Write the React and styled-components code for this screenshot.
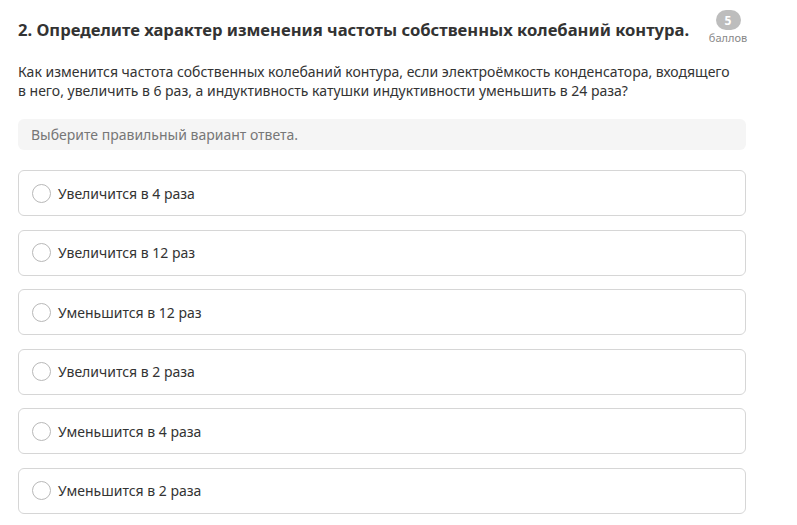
import styled, { createGlobalStyle } from 'styled-components';

const GlobalStyle = createGlobalStyle`
  body {
    margin: 0;
    background: #fff;
    font-family: "Noto Sans", "Open Sans", sans-serif;
    color: #333;
  }
`;

const Page = styled.main`
  width: 728px;
  padding: 10px 0 0 18px;
`;

const Header = styled.div`
  display: flex;
  align-items: flex-start;
  justify-content: space-between;
`;

const Title = styled.h2`
  margin: 8px 0 0;
  font-size: 16.6px;
  font-weight: 700;
  line-height: 24px;
  color: #333;
`;

const Score = styled.div`
  display: flex;
  flex-direction: column;
  align-items: center;
  width: 44px;
  margin-right: -4px;
`;

const ScoreBadge = styled.span`
  display: flex;
  align-items: center;
  justify-content: center;
  width: 25px;
  height: 20px;
  border-radius: 10px;
  background: #bdbdbd;
  color: #fff;
  font-size: 12px;
  font-weight: 700;
`;

const ScoreLabel = styled.span`
  margin-top: 1px;
  font-size: 11px;
  color: #888;
  line-height: 14px;
`;

const Question = styled.p`
  margin: 17px 0 0;
  font-size: 14px;
  line-height: 19px;
  color: #333;
`;

const Hint = styled.div`
  margin-top: 19px;
  padding: 0 13px;
  height: 31px;
  display: flex;
  align-items: center;
  background: #f5f5f5;
  border-radius: 6px;
  font-size: 14px;
  color: #777;
`;

const Options = styled.div`
  display: flex;
  flex-direction: column;
  gap: 13.6px;
  margin-top: 20px;
`;

const Option = styled.label`
  display: flex;
  align-items: center;
  gap: 7px;
  height: 46px;
  box-sizing: border-box;
  padding: 0 13px;
  border: 1px solid #d6d6d6;
  border-radius: 6px;
  font-size: 14px;
  color: #333;
  cursor: pointer;
`;

const Radio = styled.span`
  width: 19px;
  height: 19px;
  box-sizing: border-box;
  border: 1px solid #b8b8b8;
  border-radius: 50%;
  background: #fff;
  flex: none;
`;

const answers = [
  'Увеличится в 4 раза',
  'Увеличится в 12 раз',
  'Уменьшится в 12 раз',
  'Увеличится в 2 раза',
  'Уменьшится в 4 раза',
  'Уменьшится в 2 раза',
];

const App = () => {
  return (
    <Page>
      <GlobalStyle />
      <Header>
        <Title>2. Определите характер изменения частоты собственных колебаний контура.</Title>
        <Score>
          <ScoreBadge>5</ScoreBadge>
          <ScoreLabel>баллов</ScoreLabel>
        </Score>
      </Header>
      <Question>
        Как изменится частота собственных колебаний контура, если электроёмкость конденсатора, входящего
        <br />
        в него, увеличить в 6 раз, а индуктивность катушки индуктивности уменьшить в 24 раза?
      </Question>
      <Hint>Выберите правильный вариант ответа.</Hint>
      <Options>
        {answers.map((text) => (
          <Option key={text}>
            <Radio />
            {text}
          </Option>
        ))}
      </Options>
    </Page>
  );
};

export default App;
